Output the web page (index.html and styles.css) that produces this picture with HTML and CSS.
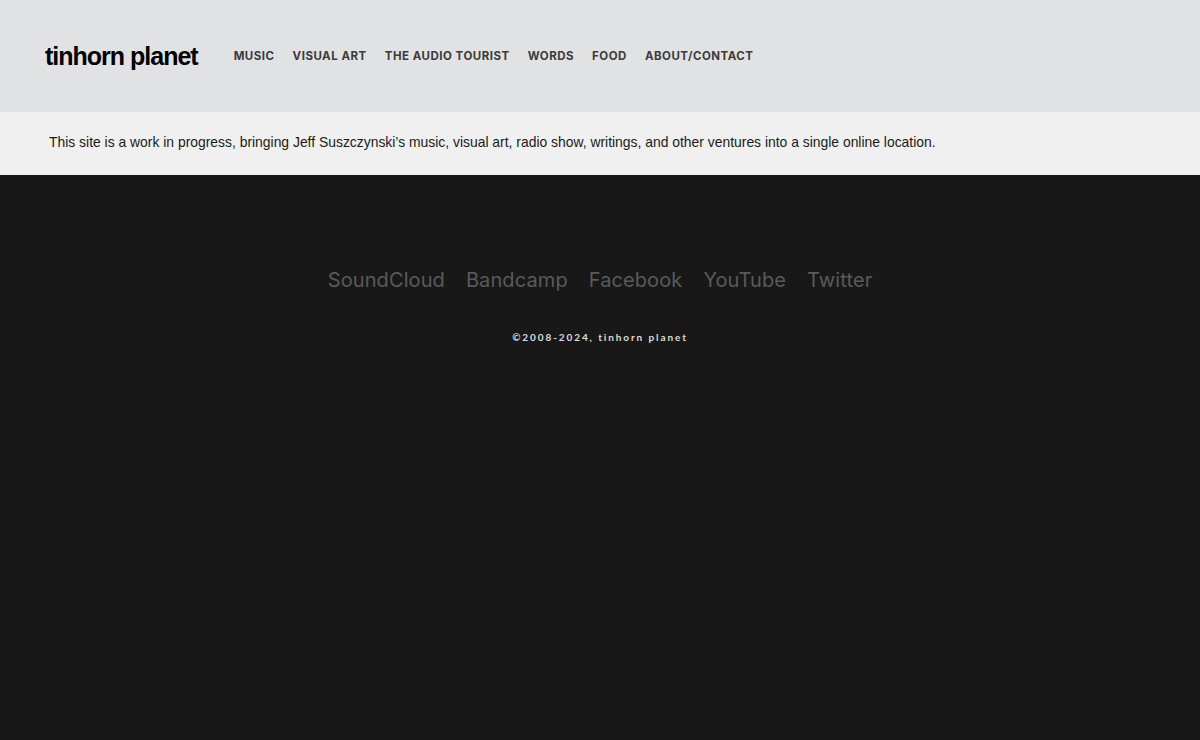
FILE: index.html
```html
<!DOCTYPE html>
<html>
<head>
<meta charset="utf-8">
<link rel="stylesheet" href="styles.css">
</head>
<body>
<header class="site-header">
  <div class="logo">tinhorn planet</div>
  <nav class="nav">
    <a href="#">MUSIC</a>
    <a href="#">VISUAL ART</a>
    <a href="#">THE AUDIO TOURIST</a>
    <a href="#">WORDS</a>
    <a href="#">FOOD</a>
    <a href="#">ABOUT/CONTACT</a>
  </nav>
</header>
<div class="banner">
  <p>This site is a work in progress, bringing Jeff Suszczynski’s music, visual art, radio show, writings, and other ventures into a single online location.</p>
</div>
<footer class="footer">
  <div class="social">
    <a href="#">SoundCloud</a>
    <a href="#">Bandcamp</a>
    <a href="#">Facebook</a>
    <a href="#">YouTube</a>
    <a href="#">Twitter</a>
  </div>
  <div class="copy">©2008-2024, tinhorn planet</div>
</footer>
</body>
</html>
```
FILE: styles.css
```css
html, body {
  margin: 0;
  padding: 0;
  height: 100%;
}
body {
  background: #181818;
  font-family: "Liberation Sans", Arial, sans-serif;
  display: flex;
  flex-direction: column;
}
.site-header {
  background: #e1e2e4;
  height: 112px;
  display: flex;
  align-items: center;
  padding: 0 45px;
  box-sizing: border-box;
}
.logo {
  font-family: "Liberation Sans", Arial, sans-serif;
  font-weight: bold;
  font-size: 25px;
  letter-spacing: -1px;
  color: #000;
  margin-right: 36px;
  position: relative;
  top: 0px;
}
.nav {
  display: flex;
  gap: 18px;
}
.nav a {
  font-family: "Inter", "Liberation Sans", sans-serif;
  font-weight: 700;
  font-size: 11.5px;
  letter-spacing: 0.5px;
  color: #3b3b3b;
  text-decoration: none;
}
.banner {
  background: #f0f0f0;
  height: 63px;
  display: flex;
  align-items: center;
  padding: 0 49px;
}
.banner p {
  margin: 0;
  font-size: 13.9px;
  color: #1a1a1a;
  letter-spacing: 0;
  position: relative;
  top: -2px;
}
.footer {
  flex: 1;
  background: #181818;
  display: flex;
  flex-direction: column;
  align-items: center;
  padding-top: 93px;
}
.social {
  display: flex;
  gap: 21px;
}
.social a {
  font-family: "Inter", "Liberation Sans", sans-serif;
  font-size: 20px;
  color: #5a5a5a;
  text-decoration: none;
  letter-spacing: 0.1px;
}
.copy {
  margin-top: 39px;
  font-family: "Lato", "Liberation Sans", sans-serif;
  font-weight: 700;
  font-size: 10px;
  letter-spacing: 1.9px;
  color: #dcdcdc;
}
```
